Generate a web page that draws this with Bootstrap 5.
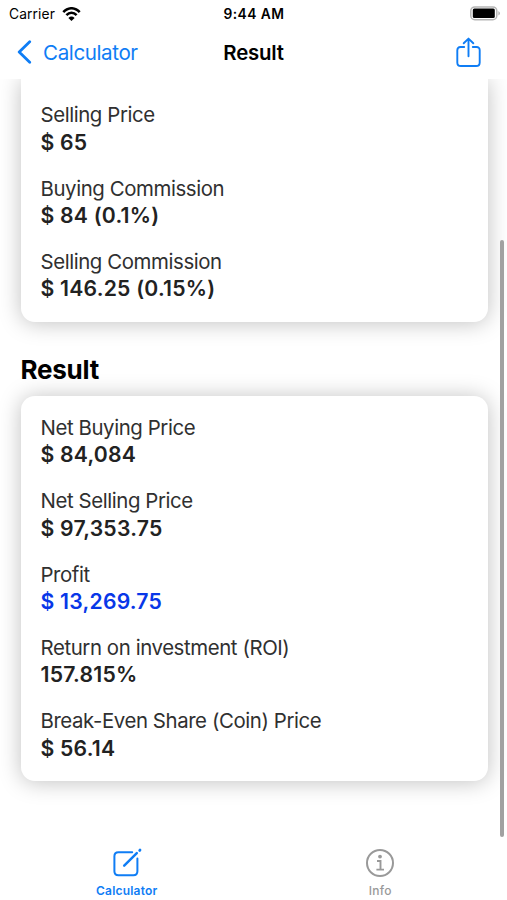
<!DOCTYPE html>
<html lang="en">
<head>
<meta charset="utf-8">
<meta name="viewport" content="width=device-width, initial-scale=1">
<title>Result</title>
<link href="https://cdn.jsdelivr.net/npm/bootstrap@5.3.0/dist/css/bootstrap.min.css" rel="stylesheet">
<style>
  body { font-family: Inter, "Liberation Sans", sans-serif; height: 900px; color: #000; white-space: nowrap; }
  svg { display: block; }
  .ios-blue { color: #0f7df5; }
  .status-bar { height: 28px; font-size: 13.8px; line-height: 28px; padding: 0 8px 0 9px; }
  .side { flex: 1 1 0; }
  .carrier { letter-spacing: .1px; }
  .wifi { margin-left: 7px; }
  .clock { font-weight: 600; letter-spacing: .45px; }
  .title-bar { height: 51px; padding: 0 26px; }
  .back { font-size: 20.6px; letter-spacing: -.4px; gap: 11px; margin-left: -9px; }
  .back span { padding-top: 1px; }
  .page-title { font-size: 20.4px; font-weight: 600; letter-spacing: -.2px; line-height: 50px; padding-bottom: 2px; }
  .share { padding-bottom: 3px; }
  .content { padding: 0 19.5px 0 20.5px; }
  .sheet { border-radius: 14px; box-shadow: 0 1px 22px rgba(0,0,0,.25); padding: 18.3px 20px 19.3px; gap: 18.3px; }
  .sheet-cut { border-radius: 0 0 14px 14px; padding-top: 22.3px; }
  .entry { color: #303030; font-size: 20.4px; line-height: 27.5px; }
  .entry dt { font-weight: 400; letter-spacing: -.41px; }
  .entry dd { color: #222; font-size: 21.2px; font-weight: 600; margin: 0; letter-spacing: .22px; }
  .entry dd.gain { color: #0837e8; }
  .section-title { font-size: 26px; font-weight: 700; line-height: 30px; margin: 33px 0 10.5px; letter-spacing: -.25px; }
  .scroll-thumb { right: 3px; top: 161px; width: 4px; height: 597px; border-radius: 2px; background: #a1a1a1; }
  .tabs { height: 60px; font-size: 12px; line-height: 16px; letter-spacing: .2px; }
  .tabs a { flex: 1 1 0; gap: 5px; padding-top: 8px; }
  .tab-off { color: #999; }
</style>
<script src="https://cdn.jsdelivr.net/npm/bootstrap@5.3.0/dist/js/bootstrap.bundle.min.js"></script>
</head>
<body class="d-flex flex-column bg-white overflow-hidden">
<div class="status-bar d-flex align-items-center">
  <div class="side d-flex align-items-center">
    <span class="carrier">Carrier</span>
    <svg class="wifi" width="19" height="15" viewBox="0 0 19 15" fill="none" stroke="#000" stroke-width="2.5"><path d="M1.3 5.2C6-.1 13-.1 17.7 5.2M4.4 8.2c3-3.2 7.2-3.2 10.2 0"/><path d="M9.5 14 6.4 10.9q3.1-2.6 6.2 0z" fill="#000" stroke="none"/></svg>
  </div>
  <span class="clock">9:44 AM</span>
  <div class="side d-flex justify-content-end">
    <svg width="29" height="16" viewBox="0 0 29 16" overflow="visible"><rect x=".8" y=".9" width="26" height="12.8" rx="4" fill="#fff" stroke="#b5b5b5" stroke-width="1.5"/><rect x="2.8" y="2.6" width="22" height="9.4" rx="1.5" fill="#000"/><path d="M28.4 5q3.2 2.3 0 4.6z" fill="#b0b0b0"/></svg>
  </div>
</div>
<nav class="title-bar d-flex align-items-center">
  <div class="side">
    <a href="#" class="back ios-blue d-inline-flex align-items-center text-decoration-none">
      <svg width="15" height="24" viewBox="0 0 15 24" fill="none" stroke="currentColor" stroke-width="2.8" stroke-linecap="round" stroke-linejoin="round"><path d="M12.7 1.7 2.2 12l10.5 10.3"/></svg>
      <span>Calculator</span>
    </a>
  </div>
  <h1 class="page-title m-0">Result</h1>
  <div class="side share d-flex justify-content-end ios-blue">
    <svg width="25" height="31" viewBox="0 0 25 31" fill="none" stroke="currentColor" stroke-width="1.9" stroke-linecap="round" stroke-linejoin="round"><path d="M8.2 10H4.5Q1.3 10 1.3 13.2v12.2q0 3.6 3.6 3.6h15.2q3.6 0 3.6-3.6V13.2Q23.7 10 20.5 10h-3.7M12.5 19.3V1.7M7.7 6.3l4.8-4.7 4.8 4.7"/></svg>
  </div>
</nav>
<main class="content flex-grow-1 position-relative overflow-hidden">
  <dl class="sheet sheet-cut d-flex flex-column bg-white m-0">
    <div class="entry"><dt>Selling Price</dt><dd>$ 65</dd></div>
    <div class="entry"><dt>Buying Commission</dt><dd>$ 84 (0.1%)</dd></div>
    <div class="entry"><dt>Selling Commission</dt><dd>$ 146.25 (0.15%)</dd></div>
  </dl>
  <h2 class="section-title">Result</h2>
  <dl class="sheet d-flex flex-column bg-white m-0">
    <div class="entry"><dt>Net Buying Price</dt><dd>$ 84,084</dd></div>
    <div class="entry"><dt>Net Selling Price</dt><dd>$ 97,353.75</dd></div>
    <div class="entry"><dt>Profit</dt><dd class="gain">$ 13,269.75</dd></div>
    <div class="entry"><dt>Return on investment (ROI)</dt><dd>157.815%</dd></div>
    <div class="entry"><dt>Break-Even Share (Coin) Price</dt><dd>$ 56.14</dd></div>
  </dl>
  <div class="scroll-thumb position-absolute"></div>
</main>
<nav class="tabs d-flex text-center">
  <a href="#" class="ios-blue fw-semibold d-flex flex-column align-items-center text-decoration-none">
    <svg width="30" height="30" viewBox="0 0 30 30" fill="none" stroke="currentColor" stroke-width="2" stroke-linecap="round"><path d="M20.2 4.3H6.4Q2.4 4.3 2.4 8.3v15q0 4 4 4h15q4 0 4-4V10.6"/><path d="m12.2 17.6 12.6-12.4" stroke-width="2.5"/><path d="m27.7 2.4.3-.3" stroke-width="2.8"/></svg>
    <span>Calculator</span>
  </a>
  <a href="#" class="tab-off fw-medium d-flex flex-column align-items-center text-decoration-none">
    <svg width="30" height="30" viewBox="0 0 30 30" fill="none" stroke="currentColor" stroke-width="2"><circle cx="15" cy="15" r="13"/><path d="M12 13h3.5v8.4M11.4 21.6h7.6" stroke-width="1.9"/><circle cx="15" cy="8.6" r="1.9" fill="currentColor" stroke="none"/></svg>
    <span>Info</span>
  </a>
</nav>
</body>
</html>
